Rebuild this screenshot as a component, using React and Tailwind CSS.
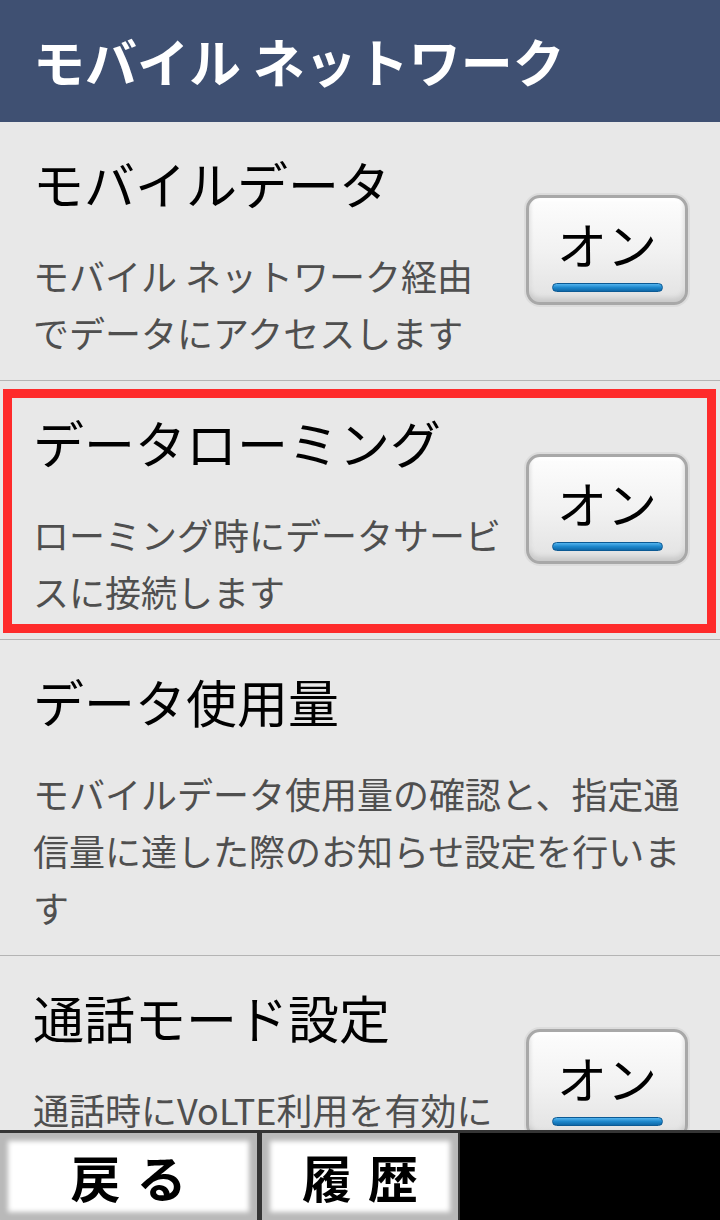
const FONT = { fontFamily: '"Noto Sans CJK JP", "Noto Sans", sans-serif' };

const ROWS = [
  {
    title: "モバイルデータ",
    lines: ["モバイル ネットワーク経由", "でデータにアクセスします"],
    toggle: true,
  },
  {
    title: "データローミング",
    lines: ["ローミング時にデータサービ", "スに接続します"],
    toggle: true,
    focused: true,
  },
  {
    title: "データ使用量",
    lines: ["モバイルデータ使用量の確認と、指定通", "信量に達した際のお知らせ設定を行いま", "す"],
  },
  {
    title: "通話モード設定",
    lines: ["通話時にVoLTE利用を有効に", "します"],
    toggle: true,
  },
];

function OnButton() {
  return (
    <div className="mb-[14px] flex h-[110px] w-[162px] shrink-0 flex-col items-center rounded-[14px] border-[3px] border-[#a8a8a8] bg-gradient-to-b from-[#fdfdfd] via-[#f2f2f2] to-[#e2e2e2] pt-[19px] shadow-[0_0_0_2px_#dcdcdc,inset_0_-4px_5px_#c9c9c9,inset_0_3px_3px_#ffffff]">
      <span className="text-[50px] leading-[52px] text-black">オン</span>
      <span className="mt-[14px] h-[9px] w-[111px] rounded-full border border-[#0c5a94] bg-gradient-to-b from-[#52b4ee] via-[#1e88cc] to-[#0f68a8]" />
    </div>
  );
}

function SettingRow({ row }) {
  return (
    <div className="relative flex items-center border-b border-[#b4b4b4] pl-[33px] pr-[32px] pt-[31px] pb-[19px]">
      <div className="min-w-0 flex-1">
        <div className="whitespace-nowrap text-[51px] leading-[60px] text-black">{row.title}</div>
        <div className="mt-[34px] text-[36px] leading-[57px] text-[#4f4f4f]">
          {row.lines.map((line) => (
            <div key={line} className="whitespace-nowrap">
              {line}
            </div>
          ))}
        </div>
      </div>
      {row.toggle && <OnButton />}
      {row.focused && (
        <div className="pointer-events-none absolute top-[8px] bottom-[6px] left-[3px] right-[4px] border-[9px] border-[#fe2b2b]" />
      )}
    </div>
  );
}

function BarButton({ label, width }) {
  return (
    <button
      className={`flex h-full items-center justify-center bg-white pl-[16px] text-[50px] font-bold tracking-[16px] text-black shadow-[inset_0_0_5px_8px_#b9b9b9] ${width}`}
    >
      {label}
    </button>
  );
}

export default function App() {
  return (
    <div className="flex h-[1220px] flex-col overflow-hidden bg-[#e8e8e8]" style={FONT}>
      <div className="flex h-[122px] shrink-0 items-center bg-[#3f5072] pl-[33px]">
        <h1 className="text-[52px] font-bold leading-none text-white">モバイル ネットワーク</h1>
      </div>

      <div className="min-h-0 flex-1 overflow-hidden">
        {ROWS.map((row) => (
          <SettingRow key={row.title} row={row} />
        ))}
      </div>

      <div className="flex h-[90px] shrink-0 border-t-[3px] border-[#353535] bg-black">
        <BarButton label="戻る" width="w-[257px]" />
        <div className="w-[5px] bg-[#353535]" />
        <BarButton label="履歴" width="w-[196px]" />
        <div className="w-[2px] bg-[#353535]" />
      </div>
    </div>
  );
}
